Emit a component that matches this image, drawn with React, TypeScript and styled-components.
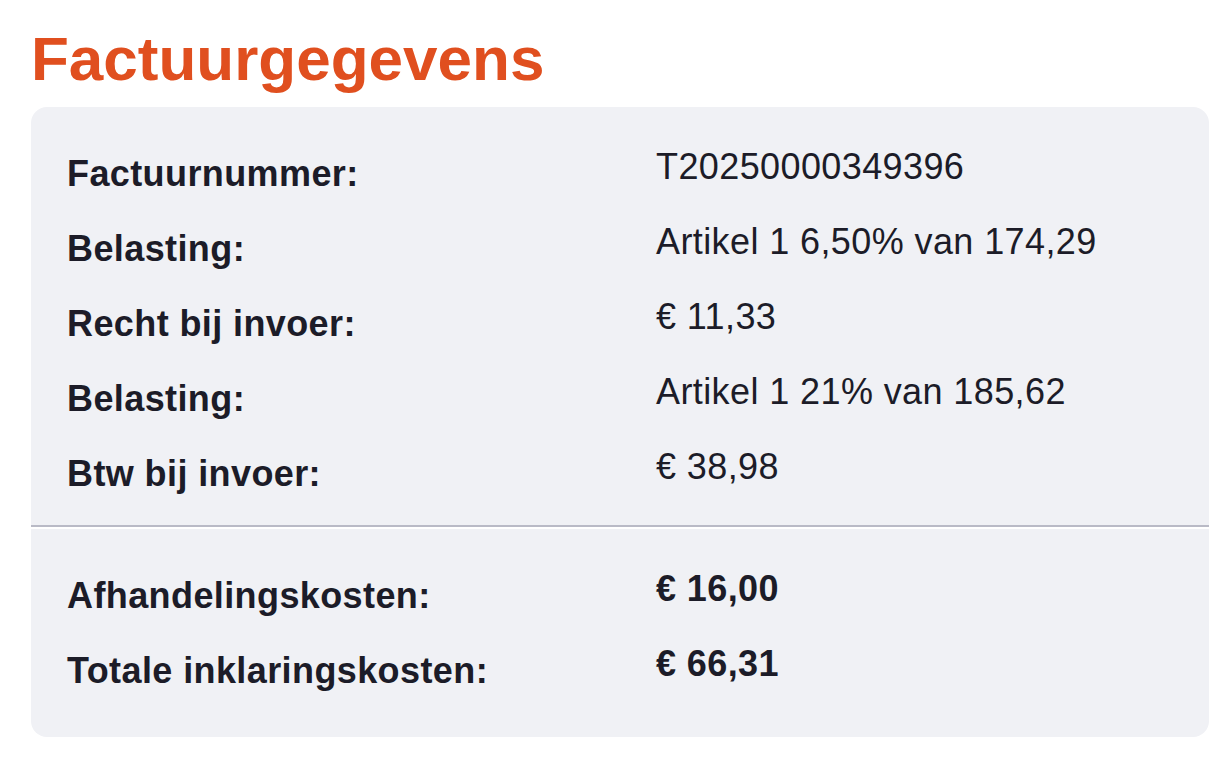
import styled, { createGlobalStyle } from "styled-components";

type Line = {
    label: string,
    value: string,
    strong?: boolean
}

const charges: Line[] = [
    { label: "Factuurnummer:", value: "T20250000349396" },
    { label: "Belasting:", value: "Artikel 1 6,50% van 174,29" },
    { label: "Recht bij invoer:", value: "€ 11,33" },
    { label: "Belasting:", value: "Artikel 1 21% van 185,62" },
    { label: "Btw bij invoer:", value: "€ 38,98" },
];

const totals: Line[] = [
    { label: "Afhandelingskosten:", value: "€ 16,00", strong: true },
    { label: "Totale inklaringskosten:", value: "€ 66,31", strong: true },
];

const GlobalStyle = createGlobalStyle`
    body {
        margin: 0;
        background: #fff;
        font-family: "Liberation Sans", Arial, Helvetica, sans-serif;
        color: #1c1c28;
    }
`;

const App = () => {
    return (
        <>
            <GlobalStyle />
            <Page>
                <Title>Factuurgegevens</Title>
                <Panel>
                    <Section $top={29} $bottom={14}>
                        {charges.map((line, i) => (
                            <Row key={i}>
                                <Label>{line.label}</Label>
                                <Value $strong={line.strong}>{line.value}</Value>
                            </Row>
                        ))}
                    </Section>
                    <Divider />
                    <Section $top={29} $bottom={29}>
                        {totals.map((line, i) => (
                            <Row key={i}>
                                <Label>{line.label}</Label>
                                <Value $strong={line.strong}>{line.value}</Value>
                            </Row>
                        ))}
                    </Section>
                </Panel>
            </Page>
        </>
    );
};

const Page = styled.div`
    padding: 21px 23px 0 31px;
`;

const Title = styled.h1`
    margin: 0 0 11px 0;
    font-size: 62px;
    line-height: 75px;
    font-weight: 700;
    color: #e04f1f;
`;

const Panel = styled.div`
    background-color: #f0f1f5;
    border-radius: 16px;
`;

const Section = styled.div<{ $top: number, $bottom: number }>`
    padding: ${p => p.$top}px 36px ${p => p.$bottom}px 36px;
`;

const Row = styled.div`
    display: grid;
    grid-template-columns: 589px 1fr;
    align-items: start;
    padding: 10.5px 0;
    letter-spacing: 0.4px;
`;

const Label = styled.span`
    font-size: 36px;
    line-height: 54px;
    font-weight: 700;
`;

const Value = styled.span<{ $strong?: boolean }>`
    font-size: 36px;
    line-height: 40px;
    font-weight: ${p => (p.$strong ? 700 : 400)};
`;

const Divider = styled.hr`
    margin: 0;
    border: none;
    border-top: 2px solid #b9bac6;
    border-bottom: 2px solid #ffffff;
`;

export default App;
